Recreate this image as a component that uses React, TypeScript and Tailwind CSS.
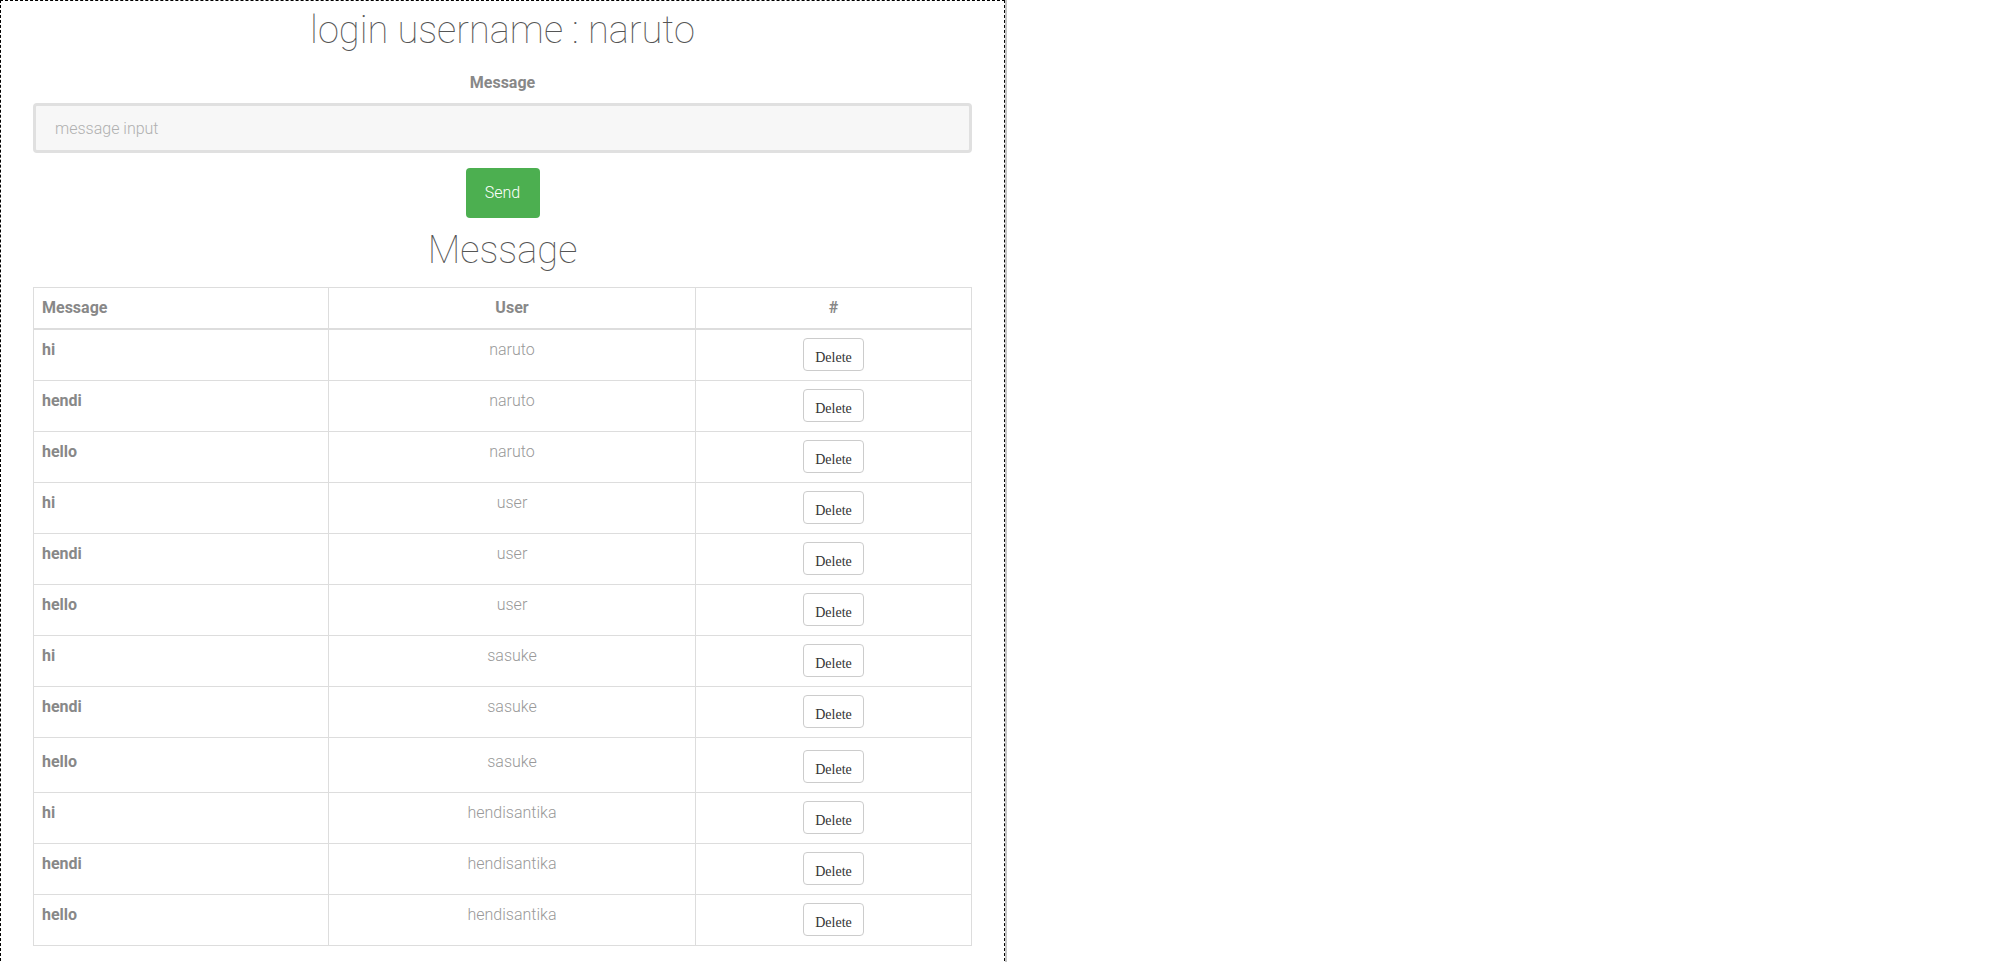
const rows = [
  { msg: 'hi', user: 'naruto' },
  { msg: 'hendi', user: 'naruto' },
  { msg: 'hello', user: 'naruto' },
  { msg: 'hi', user: 'user' },
  { msg: 'hendi', user: 'user' },
  { msg: 'hello', user: 'user' },
  { msg: 'hi', user: 'sasuke' },
  { msg: 'hendi', user: 'sasuke' },
  { msg: 'hello', user: 'sasuke', tall: true },
  { msg: 'hi', user: 'hendisantika' },
  { msg: 'hendi', user: 'hendisantika' },
  { msg: 'hello', user: 'hendisantika' },
];

export default function App() {
  return (
    <div className="min-h-screen bg-white font-['Roboto',sans-serif]">
      <div className="w-[1005px] border border-dashed border-black px-[32px] pt-[5px] pb-[24px] shadow-[2px_0_0_#c4c4c4]">
        <h1 className="text-center text-[38px] leading-[48px] font-thin text-[#555]">
          login username : naruto
        </h1>

        <form className="mt-[17px] flex flex-col items-center" onSubmit={(e) => e.preventDefault()}>
          <label className="text-base leading-6 font-bold text-[#888]">Message</label>
          <input
            type="text"
            placeholder="message input"
            className="mt-[8px] h-[50px] w-full rounded-[4px] border-[3px] border-[#e0e0e0] bg-[#f7f7f7] px-[19px] text-base font-light text-[#666] placeholder:text-[#b0b0b0] outline-none"
          />
          <button
            type="submit"
            className="mt-[15px] h-[50px] w-[74px] rounded-[4px] bg-[#4caf50] text-base font-light text-white"
          >
            Send
          </button>
        </form>

        <h2 className="mt-[8px] text-center text-[38px] leading-[48px] font-thin text-[#555]">Message</h2>

        <table className="mt-[13px] w-full table-fixed border-collapse border border-[#ddd] text-base">
          <colgroup>
            <col className="w-[295px]" />
            <col className="w-[367px]" />
            <col />
          </colgroup>
          <thead>
            <tr className="border-b-2 border-[#ddd]">
              <th className="border border-[#ddd] px-[8px] py-[8px] text-left font-bold leading-6 text-[#888]">Message</th>
              <th className="border border-[#ddd] px-[8px] py-[8px] text-center font-bold leading-6 text-[#888]">User</th>
              <th className="border border-[#ddd] px-[8px] py-[8px] text-center font-bold leading-6 text-[#888]">#</th>
            </tr>
          </thead>
          <tbody>
            {rows.map((r, i) => (
              <tr key={i} className="border-t border-[#ddd]">
                <td className={`border border-[#ddd] px-[8px] align-top font-bold leading-6 text-[#888] ${r.tall ? 'pt-[12px] pb-[9px]' : 'pt-[8px] pb-[9px]'}`}>
                  {r.msg}
                </td>
                <td className={`border border-[#ddd] px-[8px] align-top text-center font-light leading-6 text-[#999] ${r.tall ? 'pt-[12px] pb-[9px]' : 'pt-[8px] pb-[9px]'}`}>
                  {r.user}
                </td>
                <td className={`border border-[#ddd] px-[8px] align-top text-center ${r.tall ? 'pt-[12px] pb-[9px]' : 'pt-[8px] pb-[9px]'}`}>
                  <button className="h-[33px] w-[61px] rounded-[4px] border border-[#ccc] bg-white pt-[6px] font-['Liberation_Serif',serif] text-[14px] text-[#333]">
                    Delete
                  </button>
                </td>
              </tr>
            ))}
          </tbody>
        </table>
      </div>
    </div>
  );
}
